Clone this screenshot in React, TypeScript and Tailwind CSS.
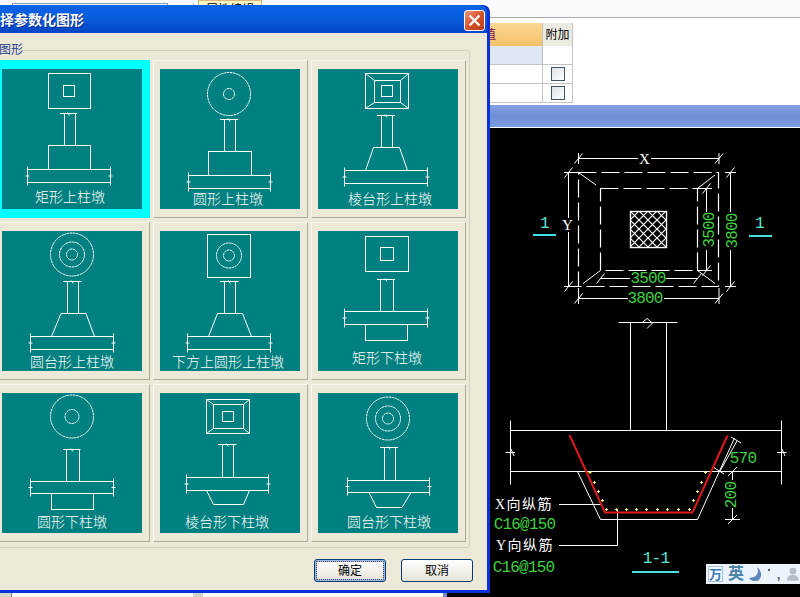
import type { ReactNode } from "react";

const L = ({ x1, y1, x2, y2 }: { x1: number; y1: number; x2: number; y2: number }) => (
  <line x1={x1} y1={y1} x2={x2} y2={y2} />
);

function Rect({ x1, y1, x2, y2 }: { x1: number; y1: number; x2: number; y2: number }) {
  return <rect x={x1} y={y1} width={x2 - x1} height={y2 - y1} />;
}

function Column({ x1, x2, top, bottom, b1, b2 }: { x1: number; x2: number; top: number; bottom: number; b1: number; b2: number }) {
  const mid = (b1 + b2) / 2;
  return (
    <>
      <L x1={b1} y1={top} x2={b2} y2={top} />
      <L x1={x1} y1={top} x2={x1} y2={bottom} />
      <L x1={x2} y1={top} x2={x2} y2={bottom} />
      <path d={`M${mid - 1} ${top - 1}L${mid + 1} ${top + 2}`} />
    </>
  );
}

function Slab({ x1, x2, y1, y2 }: { x1: number; x2: number; y1: number; y2: number }) {
  const mid = (y1 + y2) / 2;
  return (
    <>
      <L x1={x1} y1={y1} x2={x2} y2={y1} />
      <L x1={x1} y1={y2} x2={x2} y2={y2} />
      <L x1={x1} y1={y1 - 3} x2={x1} y2={y2 + 3} />
      <L x1={x2} y1={y1 - 3} x2={x2} y2={y2 + 3} />
      <L x1={x1 - 2} y1={mid} x2={x1 + 2} y2={mid} />
      <L x1={x2 - 2} y1={mid} x2={x2 + 2} y2={mid} />
    </>
  );
}

function Frustum({ x1, y1, x2, y2, m1, m2, n1, n2, i1, j1, i2, j2 }: { x1: number; y1: number; x2: number; y2: number; m1: number; m2: number; n1: number; n2: number; i1: number; j1: number; i2: number; j2: number }) {
  return (
    <>
      <Rect x1={x1} y1={y1} x2={x2} y2={y2} />
      <Rect x1={m1} y1={m2} x2={n1} y2={n2} />
      <Rect x1={i1} y1={j1} x2={i2} y2={j2} />
      <L x1={x1} y1={y1} x2={m1} y2={m2} />
      <L x1={x2} y1={y1} x2={n1} y2={m2} />
      <L x1={x1} y1={y2} x2={m1} y2={n2} />
      <L x1={x2} y1={y2} x2={n1} y2={n2} />
    </>
  );
}

function Rings({ cx, cy, radii }: { cx: number; cy: number; radii: number[] }) {
  return (
    <>
      {radii.map((r) => (
        <circle key={r} cx={cx} cy={cy} r={r} strokeDasharray="2.4 0.5" />
      ))}
    </>
  );
}

const cards: { label: string; x: number; y: number; art: ReactNode; selected?: boolean }[] = [
  {
    label: "矩形上柱墩",
    x: 68,
    y: 133,
    selected: true,
    art: (
      <>
        <Rect x1={46.5} y1={4.5} x2={88.5} y2={39.5} />
        <Rect x1={61.5} y1={16.5} x2={72.5} y2={27.5} />
        <Column x1={62.5} x2={73.5} top={44.5} bottom={76.5} b1={58} b2={75} />
        <Rect x1={46.5} y1={76.5} x2={88.5} y2={100.5} />
        <Slab x1={25.5} x2={108.5} y1={100.5} y2={113.5} />
      </>
    ),
  },
  {
    label: "圆形上柱墩",
    x: 68,
    y: 135,
    art: (
      <>
        <Rings cx={69} cy={25} radii={[21.5, 5.5]} />
        <Column x1={64.5} x2={75.5} top={50.5} bottom={82.5} b1={60} b2={78} />
        <Rect x1={48.5} y1={82.5} x2={91.5} y2={106.5} />
        <Slab x1={28.5} x2={110.5} y1={106.5} y2={119.5} />
      </>
    ),
  },
  {
    label: "棱台形上柱墩",
    x: 72,
    y: 135,
    art: (
      <>
        <Frustum x1={47.5} y1={4.5} x2={90.5} y2={39.5} m1={56.5} m2={11.5} n1={82.5} n2={33.5} i1={63.5} j1={16.5} i2={74.5} j2={27.5} />
        <Column x1={63.5} x2={74.5} top={46.5} bottom={78.5} b1={59} b2={77} />
        <path d="M55.5 78.5H81.5L89.5 101.5H47.5Z" />
        <Slab x1={26.5} x2={109.5} y1={101.5} y2={114.5} />
      </>
    ),
  },
  {
    label: "圆台形上柱墩",
    x: 70,
    y: 136,
    art: (
      <>
        <Rings cx={70} cy={23.5} radii={[21.5, 12.5, 5.5]} />
        <Column x1={65.5} x2={76.5} top={50.5} bottom={82.5} b1={61} b2={79.5} />
        <path d="M59 82.5H84L92.5 105.5H49.5Z" />
        <Slab x1={28.5} x2={111.5} y1={105.5} y2={118.5} />
      </>
    ),
  },
  {
    label: "下方上圆形上柱墩",
    x: 68,
    y: 136,
    art: (
      <>
        <Rect x1={47.5} y1={3.5} x2={90.5} y2={46.5} />
        <Rings cx={69} cy={24.5} radii={[12.5, 5.5]} />
        <Column x1={64.5} x2={75.5} top={50.5} bottom={82.5} b1={60} b2={78.5} />
        <path d="M57.5 82.5H82.5L91.5 105.5H48.5Z" />
        <Slab x1={27.5} x2={110.5} y1={105.5} y2={118.5} />
      </>
    ),
  },
  {
    label: "矩形下柱墩",
    x: 69,
    y: 132,
    art: (
      <>
        <Rect x1={47.5} y1={5.5} x2={90.5} y2={40.5} />
        <Rect x1={62.5} y1={16.5} x2={75.5} y2={29.5} />
        <Column x1={62.5} x2={75.5} top={48.5} bottom={80.5} b1={59} b2={77} />
        <Slab x1={26.5} x2={109.5} y1={80.5} y2={93.5} />
        <Rect x1={47.5} y1={93.5} x2={89.5} y2={109.5} />
      </>
    ),
  },
  {
    label: "圆形下柱墩",
    x: 70,
    y: 134,
    art: (
      <>
        <Rings cx={70} cy={23.5} radii={[21.5, 7]} />
        <Column x1={64.5} x2={77.5} top={56.5} bottom={88.5} b1={61} b2={78.5} />
        <Slab x1={28.5} x2={111.5} y1={88.5} y2={100.5} />
        <Rect x1={49.5} y1={100.5} x2={91.5} y2={116.5} />
      </>
    ),
  },
  {
    label: "棱台形下柱墩",
    x: 67,
    y: 134,
    art: (
      <>
        <Frustum x1={46.5} y1={6.5} x2={89.5} y2={40.5} m1={53.5} m2={11.5} n1={83.5} n2={35.5} i1={62.5} j1={18.5} i2={73.5} j2={28.5} />
        <Column x1={62.5} x2={73.5} top={51.5} bottom={84.5} b1={58} b2={76.5} />
        <Slab x1={26.5} x2={108.5} y1={84.5} y2={97.5} />
        <path d="M46.5 97.5L53.5 111.5H83.5L89.5 97.5" />
      </>
    ),
  },
  {
    label: "圆台形下柱墩",
    x: 71,
    y: 134,
    art: (
      <>
        <Rings cx={70} cy={25.5} radii={[21.5, 12.5, 5.5]} />
        <Column x1={66.5} x2={77.5} top={54.5} bottom={87.5} b1={62} b2={80} />
        <Slab x1={29.5} x2={111.5} y1={87.5} y2={99.5} />
        <path d="M51 99.5L58.5 114.5H84L93 99.5" />
      </>
    ),
  },
];

function FoundationCard({ label, x, y, art, selected }: (typeof cards)[number]) {
  return (
    <div
      className={
        selected
          ? "h-[158px] border border-[#00ffff] bg-[#00ffff] pl-[6px] pt-[8px]"
          : "h-[158px] border border-[#f8f7f0] border-r-[#aeab9b] border-b-[#aeab9b] bg-[#ece9d8] pl-[6px] pt-[8px]"
      }
    >
      <svg width="140" height="140" viewBox="0 0 140 140" className="block bg-[#008080]">
        <g fill="none" stroke="#ffffff" strokeWidth="1">
          {art}
        </g>
        <text x={x} y={y} textAnchor="middle" className="fill-white text-[14px] font-light">
          {label}
        </text>
      </svg>
    </div>
  );
}

function Dim({ x1, y1, x2, y2 }: { x1: number; y1: number; x2: number; y2: number }) {
  return (
    <>
      <L x1={x1} y1={y1} x2={x2} y2={y2} />
      <L x1={x1 - 4} y1={y1 + 5} x2={x1 + 4} y2={y1 - 5} />
      <L x1={x2 - 4} y1={y2 + 5} x2={x2 + 4} y2={y2 - 5} />
    </>
  );
}

function CadLabel({ x, y, children, rotate, color = "fill-[#3fd03f]" }: { x: number; y: number; children: ReactNode; rotate?: boolean; color?: string }) {
  return (
    <text
      x={x}
      y={y}
      textAnchor="middle"
      dominantBaseline="central"
      letterSpacing="-0.8"
      transform={rotate ? `rotate(-90 ${x} ${y})` : undefined}
      className={`${color} font-['Liberation_Mono','Noto_Sans_CJK_SC',monospace] text-[16px]`}
      stroke="none"
    >
      {children}
    </text>
  );
}

function CadDrawing() {
  const rebarDots = [
    [606.5, 509.5], [616.5, 509.5], [626.5, 509.5], [636.5, 509.5], [646.5, 509.5], [657.5, 509.5], [667.5, 509.5], [678.5, 509.5], [689.5, 509.5],
    [590, 472.5], [594.5, 482.5], [598.5, 491.5], [602.5, 500.5],
    [705.5, 472.5], [701.5, 482.5], [697.5, 491.5], [693.5, 500.5],
  ];
  return (
    <svg width="353" height="469" viewBox="447 128 353 469" className="block">
      <defs>
        <pattern id="hatch" width="9" height="9" patternUnits="userSpaceOnUse" x="630" y="211">
          <path d="M0 0L9 9M9 0L0 9" stroke="#ffffff" strokeWidth="1.2" />
        </pattern>
      </defs>
      <g fill="none" stroke="#ffffff" strokeWidth="1">
        {/* plan */}
        <Dim x1={578.5} y1={158.5} x2={719} y2={158.5} />
        <L x1={578.5} y1={153} x2={578.5} y2={164} />
        <L x1={719} y1={153} x2={719} y2={164} />
        <rect x="578.5" y="172.5" width="140" height="114" strokeDasharray="18 5" strokeWidth="1.2" />
        <rect x="600.5" y="188.5" width="97" height="82" strokeDasharray="18 5" strokeWidth="1.2" />
        <L x1={578.5} y1={172.5} x2={596} y2={185} />
        <L x1={715} y1={175} x2={697.5} y2={188.5} />
        <L x1={600.5} y1={270.5} x2={583} y2={283.5} />
        <L x1={697.5} y1={270.5} x2={715} y2={283.5} />
        <rect x="630.5" y="211.5" width="36" height="36" fill="url(#hatch)" strokeWidth="1.4" />
        <Dim x1={568.5} y1={172.5} x2={568.5} y2={286.5} />
        <L x1={564} y1={172.5} x2={578} y2={172.5} />
        <L x1={564} y1={286.5} x2={578} y2={286.5} />
        <Dim x1={730.5} y1={172.5} x2={730.5} y2={286.5} />
        <L x1={725} y1={172.5} x2={736} y2={172.5} />
        <L x1={725} y1={286.5} x2={736} y2={286.5} />
        <Dim x1={706.5} y1={188.5} x2={706.5} y2={270.5} />
        <L x1={697} y1={188.5} x2={712} y2={188.5} />
        <L x1={697} y1={270.5} x2={712} y2={270.5} />
        <Dim x1={600.5} y1={278.5} x2={697.5} y2={278.5} />
        <Dim x1={578.5} y1={298.5} x2={719} y2={298.5} />
        <L x1={578.5} y1={288} x2={578.5} y2={304} />
        <L x1={719} y1={288} x2={719} y2={304} />
        {/* section */}
        <L x1={618.5} y1={322.5} x2={677.5} y2={322.5} />
        <path d="M642.5 322.5L647 318.5L652.5 323L647 328.5" />
        <L x1={630.5} y1={322.5} x2={630.5} y2={430.5} />
        <L x1={666.5} y1={322.5} x2={666.5} y2={430.5} />
        <L x1={510.5} y1={430.5} x2={781.5} y2={430.5} />
        <L x1={510.5} y1={471.5} x2={781.5} y2={471.5} />
        <L x1={510.5} y1={420.5} x2={510.5} y2={484.5} />
        <L x1={781.5} y1={420.5} x2={781.5} y2={484.5} />
        <path d="M505.5 452.5H515M511 449L514 456" />
        <path d="M777 452.5H786.5M782 449L785 456" />
        <path d="M577.5 471.5L600.5 519.5H697.5L734.5 438" />
        <L x1={731} y1={437} x2={741} y2={443} />
        <L x1={737} y1={441} x2={720} y2={471} />
        <L x1={713} y1={467} x2={724} y2={474} />
        <L x1={732.5} y1={471.5} x2={732.5} y2={519.5} />
        <L x1={725} y1={519.5} x2={740} y2={519.5} />
        <L x1={720} y1={471.5} x2={735} y2={471.5} />
        <L x1={728} y1={476} x2={737} y2={467} />
        <L x1={728} y1={524} x2={737} y2={515} />
        <path d="M559 504.5H601.5" />
        <path d="M559 545.5H617.5V509.5" />
      </g>
      <path d="M569.5 435L605 512.5H692.5L727.5 435.5" fill="none" stroke="#e01818" strokeWidth="2" />
      {rebarDots.map(([x, y]) => (
        <path key={`${x}-${y}`} d={`M${x - 1.5} ${y}H${x + 1.5}M${x} ${y - 1.5}V${y + 1.5}`} stroke="#f5f060" strokeWidth="1" />
      ))}
      {/* text masks over dimension lines */}
      <rect x="638" y="152" width="13" height="13" fill="#000000" />
      <rect x="561" y="218" width="13" height="14" fill="#000000" />
      <rect x="725" y="212" width="13" height="38" fill="#000000" />
      <rect x="702" y="212" width="12" height="38" fill="#000000" />
      <rect x="630" y="272" width="36" height="13" fill="#000000" />
      <rect x="628" y="292" width="36" height="13" fill="#000000" />
      <rect x="726" y="480" width="13" height="28" fill="#000000" />
      <text x="644.5" y="159" textAnchor="middle" dominantBaseline="central" className="fill-white font-['Liberation_Serif',serif] text-[15px]">X</text>
      <text x="567.5" y="225" textAnchor="middle" dominantBaseline="central" className="fill-white font-['Liberation_Serif',serif] text-[15px]">Y</text>
      <CadLabel x={733} y={231} rotate>3800</CadLabel>
      <CadLabel x={709.5} y={230} rotate>3500</CadLabel>
      <CadLabel x={648} y={279}>3500</CadLabel>
      <CadLabel x={645} y={299}>3800</CadLabel>
      <CadLabel x={743} y={459}>570</CadLabel>
      <CadLabel x={732} y={495} rotate>200</CadLabel>
      <CadLabel x={544.5} y={224} color="fill-[#5fe6d6]">1</CadLabel>
      <CadLabel x={759.5} y={224} color="fill-[#5fe6d6]">1</CadLabel>
      <path d="M533 235H556M749 236H772M632 572H679" stroke="#40e0e0" strokeWidth="2" />
      <CadLabel x={656} y={559} color="fill-[#5fe6d6]">1-1</CadLabel>
      <text x="524" y="504" dominantBaseline="central" textAnchor="middle" letterSpacing="1.5" className="fill-white font-['Liberation_Serif','Noto_Sans_CJK_SC',serif] text-[14px]">X向纵筋</text>
      <CadLabel x={524.5} y={525}>C16@150</CadLabel>
      <text x="525" y="545" dominantBaseline="central" textAnchor="middle" letterSpacing="1.5" className="fill-white font-['Liberation_Serif','Noto_Sans_CJK_SC',serif] text-[14px]">Y向纵筋</text>
      <CadLabel x={523.5} y={568}>C16@150</CadLabel>
    </svg>
  );
}

function Checkbox() {
  return <span className="h-[14px] w-[14px] border border-[#3f5468] bg-gradient-to-br from-[#dfe3e6] to-white" />;
}

function ImeBar() {
  return (
    <div className="absolute left-[706px] top-[564px] flex h-[20px] w-[94px] items-center overflow-hidden bg-[#edf3fb] pl-[2px]">
      <span className="flex h-[16px] w-[15px] items-center justify-center border border-[#a8c4e4] bg-[#f6faff] text-[13px] font-bold leading-none text-[#3a78c0]">万</span>
      <span className="ml-[5px] text-[16px] font-bold leading-none text-[#4a83a8]">英</span>
      <svg width="14" height="15" viewBox="0 0 14 15" className="ml-[4px]">
        <path d="M9 0C12 5 9 11 1 11C3 14 9 16 12 12C15 8 13 2 9 0Z" fill="#5f86b8" />
      </svg>
      <span className="mb-[8px] ml-[6px] h-[2px] w-[2px] bg-[#50667e]" />
      <span className="ml-[7px] text-[13px] font-bold leading-none text-[#50667e]">,</span>
      <svg width="14" height="15" viewBox="0 0 14 15" className="ml-[6px]">
        <circle cx="7" cy="4" r="3.5" fill="#b6bcc4" />
        <path d="M1 14C1 9 4 8 7 8C10 8 13 9 13 14Z" fill="#b6bcc4" />
      </svg>
    </div>
  );
}

function DialogButton({ children, active }: { children: ReactNode; active?: boolean }) {
  return (
    <button
      className={
        active
          ? "flex h-[23px] w-[72px] items-center justify-center rounded-[3px] border border-[#003c74] bg-gradient-to-b from-white to-[#e6e4d8] text-[12px] text-black shadow-[inset_0_0_0_2px_#9db8e4] outline-1 -outline-offset-3 outline-dotted outline-[#555555]"
          : "flex h-[23px] w-[72px] items-center justify-center rounded-[3px] border border-[#003c74] bg-gradient-to-b from-white to-[#e6e4d8] text-[12px] text-black"
      }
    >
      {children}
    </button>
  );
}

function ParamDialog() {
  return (
    <div className="absolute left-[-20px] top-[5px] flex h-[588px] w-[510px] flex-col rounded-tr-[7px] bg-[#0831d9] pb-[3px] pr-[3px]">
      <div className="flex h-[28px] justify-between rounded-tr-[7px] bg-gradient-to-b from-[#0a62e6] via-[#0a5cdc] to-[#0344c4] pl-[6px] pr-[2px] pt-[5px]">
        <span className="text-[14px] font-bold leading-[20px] text-white [text-shadow:1px_1px_0_#0a2a8a]">选择参数化图形</span>
        <span className="flex h-[21px] w-[21px] items-center justify-center rounded-[3px] border border-white bg-gradient-to-br from-[#e8967a] via-[#d9522a] to-[#b83a14]">
          <svg width="13" height="13" viewBox="0 0 13 13">
            <path d="M1.5 1.5L11.5 11.5M11.5 1.5L1.5 11.5" stroke="#ffffff" strokeWidth="2.4" />
          </svg>
        </span>
      </div>
      <div className="flex flex-1 flex-col bg-[#ece9d8] pl-[10px] pt-[17px]">
        <div className="relative h-[498px] w-[480px] rounded-[3px] border border-[#d0d0bf] pl-[4px] pt-[9px]">
          <span className="absolute left-[8px] top-[-9px] bg-[#ece9d8] pr-[1px] text-[12px] leading-[16px] text-[#1c3a8c]">图形</span>
          <div className="grid grid-cols-[155px_155px_155px] gap-x-[3px] gap-y-[4px]">
            {cards.map((card) => (
              <FoundationCard key={card.label} {...card} />
            ))}
          </div>
        </div>
        <div className="mt-[11px] flex justify-end gap-[15px] pr-[14px]">
          <DialogButton active>确定</DialogButton>
          <DialogButton>取消</DialogButton>
        </div>
      </div>
    </div>
  );
}

export default function App() {
  return (
    <div className="relative flex h-[597px] w-[800px] overflow-hidden bg-white font-['Liberation_Sans','Noto_Sans_CJK_SC',sans-serif]">
      <div className="flex w-[443px] flex-col justify-between">
        <div className="flex h-[5px] overflow-hidden pl-[12px] pt-[3px]">
          <div className="h-[20px] w-[156px] border border-[#7f9db9]" />
          <div className="ml-[25px] h-[20px] w-px bg-[#b8b8b8]" />
          <div className="ml-[4px] mt-[-3px] h-[20px] w-[64px] border border-[#d8b878] bg-[#fff4c8] pl-[7px] text-[12px] leading-[19px] text-black">属性编辑</div>
        </div>
        <div className="flex h-[4px]">
          <div className="w-[11px] bg-[#d6d3c8]" />
          <div className="w-px bg-[#808080]" />
          <div className="ml-[181px] w-[10px] bg-[#d6d3c8]" />
        </div>
      </div>
      <div className="h-[5px] w-[4px] self-end bg-[#6f8ed6]" />
      <div className="flex flex-1 flex-col">
        <div className="h-[18px] border-b border-[#a8a8a8] bg-[#fbfbfd]" />
        <div className="h-[87px] bg-white pt-[5px]">
          <div className="grid w-[126px] grid-cols-[95px_31px] grid-rows-[23px_19px_19px_19px] text-[12px]">
            <div className="flex items-center justify-end bg-gradient-to-b from-[#fcd894] to-[#f4c06a] pr-[46px] text-[#80104a]">值</div>
            <div className="flex items-center justify-center border-l border-r border-[#c4c4c4] bg-[#ecebe2] text-black">附加</div>
            <div className="border-b border-[#c4c4c4] bg-[#dfe7f5]" />
            <div className="border-b border-l border-r border-[#c4c4c4]" />
            <div className="border-b border-[#c4c4c4]" />
            <div className="flex items-center justify-center border-b border-l border-r border-[#c4c4c4]"><Checkbox /></div>
            <div className="border-b border-[#c4c4c4]" />
            <div className="flex items-center justify-center border-b border-l border-r border-[#c4c4c4]"><Checkbox /></div>
          </div>
        </div>
        <div className="h-[23px] border-b border-white bg-gradient-to-b from-[#86a2e2] via-[#6f8ed6] to-[#7c9ce2]" />
        <div className="flex-1 bg-black">
          <CadDrawing />
        </div>
      </div>
      <ImeBar />
      <ParamDialog />
    </div>
  );
}
